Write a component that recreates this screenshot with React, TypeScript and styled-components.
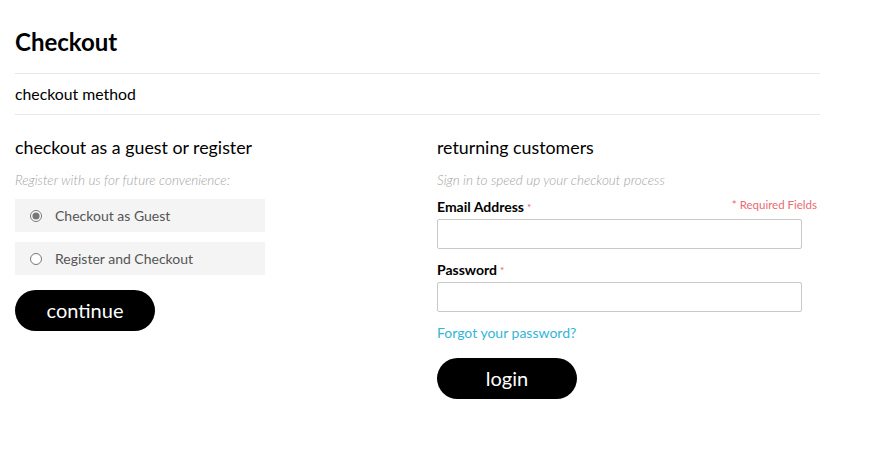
import React from "react";
import styled, { createGlobalStyle } from "styled-components";

const Global = createGlobalStyle`
  html, body { margin: 0; padding: 0; background: #fff; }
  body { font-family: Lato, "Open Sans", Arial, sans-serif; color: #000; }
  * { box-sizing: border-box; }
`;

const Page = styled.div`
  width: 805px;
  margin-left: 15px;
  padding-top: 27px;
`;

const Title = styled.h1`
  margin: 0;
  font-size: 24px;
  font-weight: 700;
  line-height: 30px;
  height: 46px;
`;

const MethodBar = styled.div`
  border-top: 1px solid #e8e8e8;
  border-bottom: 1px solid #e8e8e8;
  height: 42px;
  display: flex;
  align-items: center;
  font-size: 15.8px;
  padding-bottom: 1px;
`;

const Columns = styled.div`
  display: grid;
  grid-template-columns: 422px 1fr;
  padding-top: 21px;
`;

const Column = styled.div`
  display: flex;
  flex-direction: column;
`;

const Heading = styled.h2`
  margin: 0;
  font-size: 17.8px;
  font-weight: 400;
  line-height: 22px;
`;

const Note = styled.p`
  margin: 14px 0 0;
  font-size: 13.5px;
  font-style: italic;
  font-weight: 300;
  color: #a4a4a4;
  line-height: 16px;
`;

const Options = styled.div`
  display: flex;
  flex-direction: column;
  gap: 10px;
  margin-top: 11px;
`;

const Option = styled.label`
  width: 250px;
  height: 33px;
  background: #f4f4f4;
  display: flex;
  align-items: center;
  padding-left: 15px;
  font-size: 14px;
  color: #555;
  cursor: pointer;
`;

const Radio = styled.input`
  width: 12px;
  height: 12px;
  margin: 0 13px 0 0;
  accent-color: #777;
`;

const PillButton = styled.button<{ $top: number }>`
  width: 140px;
  height: 41px;
  border: none;
  border-radius: 21px;
  background: #000;
  color: #fff;
  font-family: Lato, Arial, sans-serif;
  font-size: 20px;
  font-weight: 400;
  margin-top: ${(p) => p.$top}px;
  padding: 0 0 2px;
  cursor: pointer;
`;

const FieldHead = styled.div<{ $top: number }>`
  width: 380px;
  display: flex;
  justify-content: space-between;
  align-items: flex-start;
  margin-top: ${(p) => p.$top}px;
`;

const Label = styled.label`
  font-size: 14px;
  font-weight: 700;
  line-height: 18px;
`;

const Star = styled.span`
  color: #e8545a;
  font-size: 10px;
  font-weight: 400;
  margin-left: 3px;
  vertical-align: top;
`;

const Required = styled.span`
  color: #ea6a72;
  font-size: 11.5px;
  line-height: 14px;
  margin-top: 0px;
`;

const Input = styled.input`
  width: 365px;
  height: 30px;
  border: 1px solid #c8c8c8;
  border-radius: 2px;
  margin-top: 3px;
  padding: 0 8px;
  font-family: Lato, Arial, sans-serif;
  font-size: 14px;
`;

const Forgot = styled.a`
  margin-top: 12px;
  font-size: 14px;
  color: #33b5d8;
  text-decoration: none;
  line-height: 18px;
`;

export default function App() {
  return (
    <>
      <Global />
      <Page>
        <Title>Checkout</Title>
        <MethodBar>checkout method</MethodBar>
        <Columns>
          <Column>
            <Heading>checkout as a guest or register</Heading>
            <Note>Register with us for future convenience:</Note>
            <Options>
              <Option>
                <Radio type="radio" name="method" defaultChecked />
                Checkout as Guest
              </Option>
              <Option>
                <Radio type="radio" name="method" />
                Register and Checkout
              </Option>
            </Options>
            <PillButton $top={15}>continue</PillButton>
          </Column>
          <Column>
            <Heading>returning customers</Heading>
            <Note>Sign in to speed up your checkout process</Note>
            <FieldHead $top={10}>
              <Label>
                Email Address<Star>*</Star>
              </Label>
              <Required>* Required Fields</Required>
            </FieldHead>
            <Input type="email" />
            <FieldHead $top={12}>
              <Label>
                Password<Star>*</Star>
              </Label>
            </FieldHead>
            <Input type="password" />
            <Forgot href="#">Forgot your password?</Forgot>
            <PillButton $top={16}>login</PillButton>
          </Column>
        </Columns>
      </Page>
    </>
  );
}
